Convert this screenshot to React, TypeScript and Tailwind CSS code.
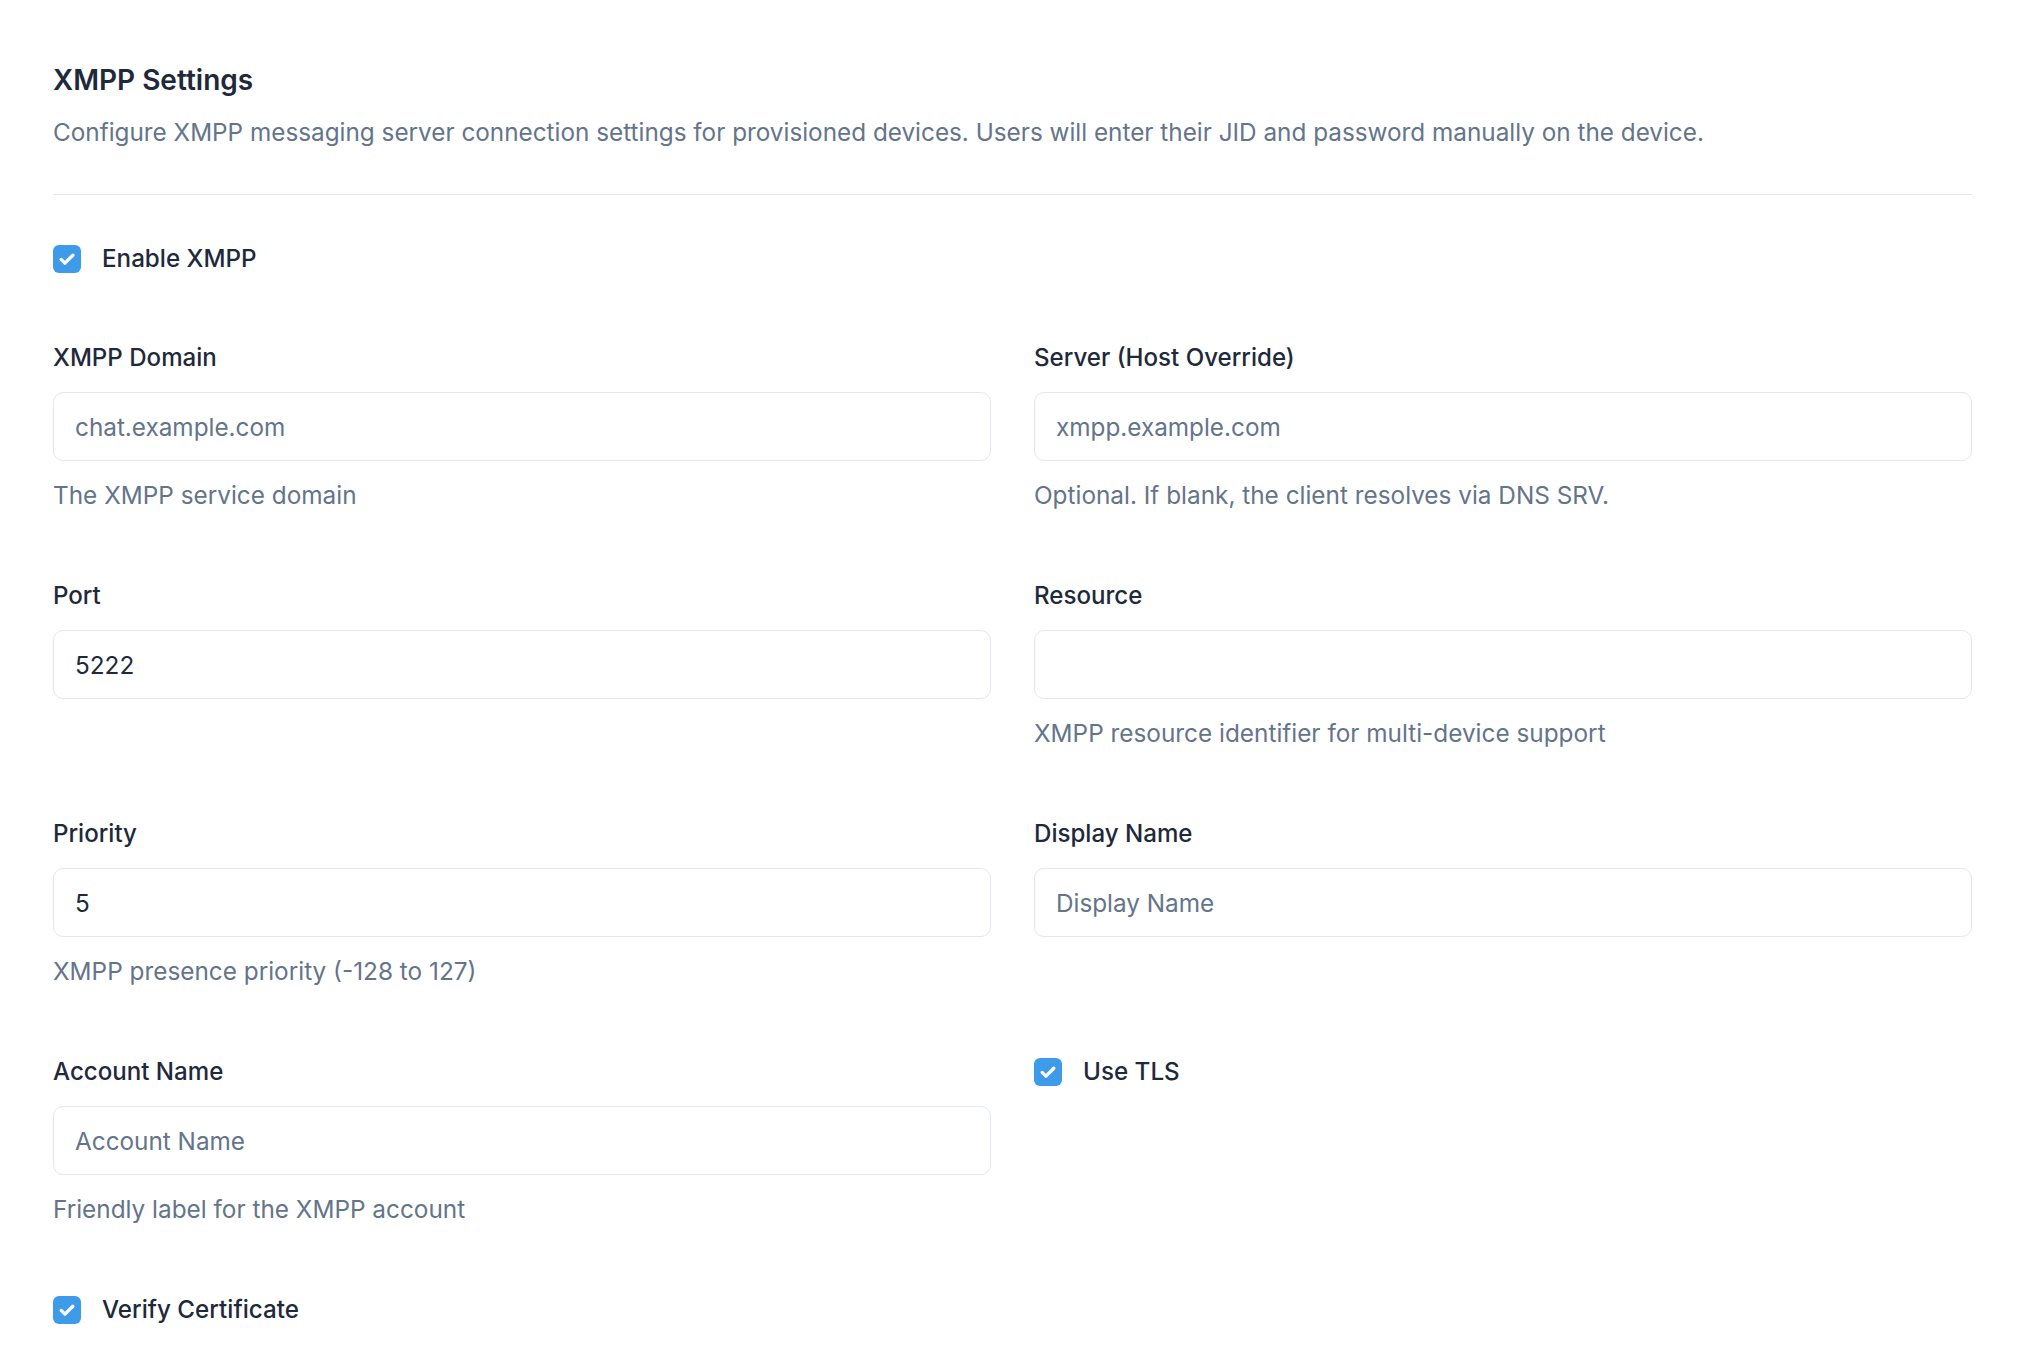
import React from "react";

const font = { fontFamily: "Inter, 'Noto Sans', sans-serif" };

function Check({ label }: { label: string }) {
  return (
    <label className="flex items-center h-[31px] gap-[21px] cursor-pointer">
      <span className="w-[28px] h-[28px] rounded-[6px] bg-[#3d9be9] flex items-center justify-center shrink-0">
        <svg width="20" height="20" viewBox="0 0 24 24" fill="none" stroke="white" strokeWidth="4" strokeLinecap="round" strokeLinejoin="round">
          <path d="M5 12.5l4.5 4.5L19 7.5" />
        </svg>
      </span>
      <span className="text-[24.2px] font-medium text-[#1e293b] leading-[31px]">{label}</span>
    </label>
  );
}

function Field({
  label,
  placeholder,
  value,
  help,
}: {
  label: string;
  placeholder?: string;
  value?: string;
  help?: string;
}) {
  return (
    <div className="flex flex-col">
      <div className="text-[24.1px] font-medium text-[#1e293b] leading-[31px] mb-[19px]">{label}</div>
      <input
        className="h-[69px] w-full rounded-[10px] border border-[#e2e8f0] bg-white px-[21px] text-[24.3px] text-[#1e293b] placeholder:text-[#64748b] outline-none"
        style={font}
        placeholder={placeholder}
        defaultValue={value}
      />
      {help ? (
        <div className="mt-[19px] text-[24.35px] leading-[31px] text-[#64748b]">{help}</div>
      ) : (
        <div className="mt-[19px] h-[31px]" />
      )}
    </div>
  );
}

export default function App() {
  return (
    <div className="min-h-screen bg-white" style={font}>
      <div className="pl-[53px] pr-[54px] pt-[64px] pb-[40px]">
        <h2 className="text-[28px] leading-[32px] font-semibold text-[#1e293b]">XMPP Settings</h2>
        <p className="mt-[21px] text-[24.3px] leading-[31px] text-[#64748b]">
          Configure XMPP messaging server connection settings for provisioned devices. Users will enter their JID and password manually on the device.
        </p>
        <div className="mt-[46px] h-px bg-[#e5e7eb]" />
        <div className="mt-[48px]">
          <Check label="Enable XMPP" />
        </div>
        <div className="mt-[68px] grid grid-cols-2 gap-x-[43px] gap-y-[69px]">
          <Field label="XMPP Domain" placeholder="chat.example.com" help="The XMPP service domain" />
          <Field
            label="Server (Host Override)"
            placeholder="xmpp.example.com"
            help="Optional. If blank, the client resolves via DNS SRV."
          />
          <Field label="Port" value="5222" />
          <Field label="Resource" help="XMPP resource identifier for multi-device support" />
          <Field label="Priority" value="5" help="XMPP presence priority (-128 to 127)" />
          <Field label="Display Name" placeholder="Display Name" />
          <Field label="Account Name" placeholder="Account Name" help="Friendly label for the XMPP account" />
          <div>
            <Check label="Use TLS" />
          </div>
        </div>
        <div className="mt-[69px]">
          <Check label="Verify Certificate" />
        </div>
      </div>
    </div>
  );
}
